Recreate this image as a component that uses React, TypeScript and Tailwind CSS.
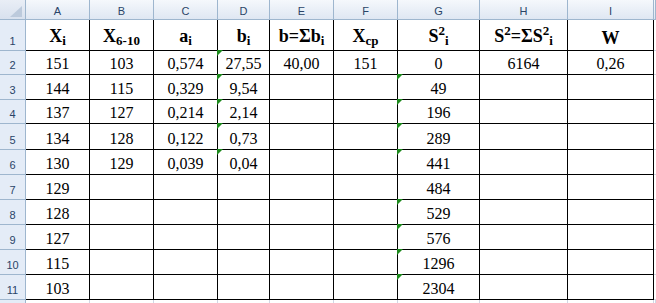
import React from "react";

const Sub = ({ children }: { children: React.ReactNode }) => (
  <span className="relative top-[3px] text-[13px]">{children}</span>
);
const Sup = ({ children }: { children: React.ReactNode }) => (
  <span className="relative top-[-7px] text-[13px]">{children}</span>
);

const cols = ["A", "B", "C", "D", "E", "F", "G", "H", "I", ""];

const header: React.ReactNode[] = [
  <>X<Sub>i</Sub></>,
  <>X<Sub>6-10</Sub></>,
  <>a<Sub>i</Sub></>,
  <>b<Sub>i</Sub></>,
  <>b=Σb<Sub>i</Sub></>,
  <>X<Sub>ср</Sub></>,
  <>S<Sup>2</Sup><Sub>i</Sub></>,
  <>S<Sup>2</Sup>=ΣS<Sup>2</Sup><Sub>i</Sub></>,
  <>W</>,
];

const A = ["151", "144", "137", "134", "130", "129", "128", "127", "115", "103"];
const B = ["103", "115", "127", "128", "129"];
const C = ["0,574", "0,329", "0,214", "0,122", "0,039"];
const D = ["27,55", "9,54", "2,14", "0,73", "0,04"];
const G = ["0", "49", "196", "289", "441", "484", "529", "576", "1296", "2304"];

function value(col: number, r: number): string {
  // r: 0..9 (row 2..11)
  switch (col) {
    case 0: return A[r] ?? "";
    case 1: return B[r] ?? "";
    case 2: return C[r] ?? "";
    case 3: return D[r] ?? "";
    case 4: return r === 0 ? "40,00" : "";
    case 5: return r === 0 ? "151" : "";
    case 6: return G[r] ?? "";
    case 7: return r === 0 ? "6164" : "";
    case 8: return r === 0 ? "0,26" : "";
  }
  return "";
}

function hasTri(col: number, r: number): boolean {
  if (col === 3 && r <= 4) return true;
  if (col === 6 && r >= 1 && r !== 5) return true;
  return false;
}

const Tri = () => (
  <svg className="absolute left-[-1px] top-[-1px] z-10" width="6" height="6" viewBox="0 0 6 6">
    <polygon points="0,0 6,0 0,6" fill="#1c8a1c" />
  </svg>
);

const RowHead = ({ n }: { n: React.ReactNode }) => (
  <div className="flex items-end justify-center border-r border-b border-[#9eb6ce] bg-[#e4ecf7] pb-[3px] font-['Liberation_Sans',sans-serif] text-[11px] leading-[12px] text-[#2a4467]">
    {n}
  </div>
);

export default function App() {
  const cells: React.ReactNode[] = [];

  // column header row
  cells.push(
    <div key="corner" className="relative border-r border-b border-[#9eb6ce] bg-gradient-to-b from-[#e9eef6] to-[#d8e1ee]">
      <svg className="absolute left-[10px] top-[6px]" width="12" height="11" viewBox="0 0 12 11">
        <polygon points="12,0 12,11 0,11" fill="#bccadc" />
      </svg>
    </div>
  );
  cols.forEach((c, i) => {
    cells.push(
      <div
        key={"h" + i}
        className="flex items-end justify-center border-r border-b border-[#9eb6ce] bg-gradient-to-b from-[#f5f8fc] to-[#dfe7f2] pb-[2px] font-['Liberation_Sans',sans-serif] text-[11px] leading-[12px] text-[#2a4467]"
      >
        {c}
      </div>
    );
  });

  // row 1
  cells.push(<RowHead key="r1" n="1" />);
  header.forEach((h, i) => {
    cells.push(
      <div
        key={"t" + i}
        className="flex items-end justify-center whitespace-nowrap border-r border-b border-black bg-white pb-[4px] font-['Liberation_Serif',serif] text-[18px] font-bold leading-[16px] text-black"
      >
        <span>{h}</span>
      </div>
    );
  });
  cells.push(<div key="t9" className="border-b border-[#d0d7e5] bg-white" />);

  // rows 2..11
  for (let r = 0; r < 10; r++) {
    cells.push(<RowHead key={"r" + (r + 2)} n={String(r + 2)} />);
    for (let c = 0; c < 9; c++) {
      cells.push(
        <div
          key={`c${r}-${c}`}
          className="relative flex items-end justify-center border-r border-b border-black bg-white pb-[2px] font-['Liberation_Serif',serif] text-[16px] leading-[16px] text-black"
        >
          {hasTri(c, r) && <Tri />}
          {value(c, r)}
        </div>
      );
    }
    cells.push(<div key={`j${r}`} className="border-b border-[#d0d7e5] bg-white" />);
  }

  // row 12 partial
  cells.push(<RowHead key="r12" n="" />);
  for (let c = 0; c < 10; c++) {
    cells.push(<div key={`z${c}`} className="border-r border-[#d0d7e5] bg-white" />);
  }

  return (
    <div className="h-[303px] w-[656px] overflow-hidden bg-white">
      <div className="grid h-[303px] w-[656px] grid-cols-[26px_64px_64px_64px_52px_64px_64px_82px_88px_86px_1fr] grid-rows-[20px_31px_24px_25px_24px_26px_25px_25px_25px_25px_25px_25px_1fr]">
        {cells}
      </div>
    </div>
  );
}
